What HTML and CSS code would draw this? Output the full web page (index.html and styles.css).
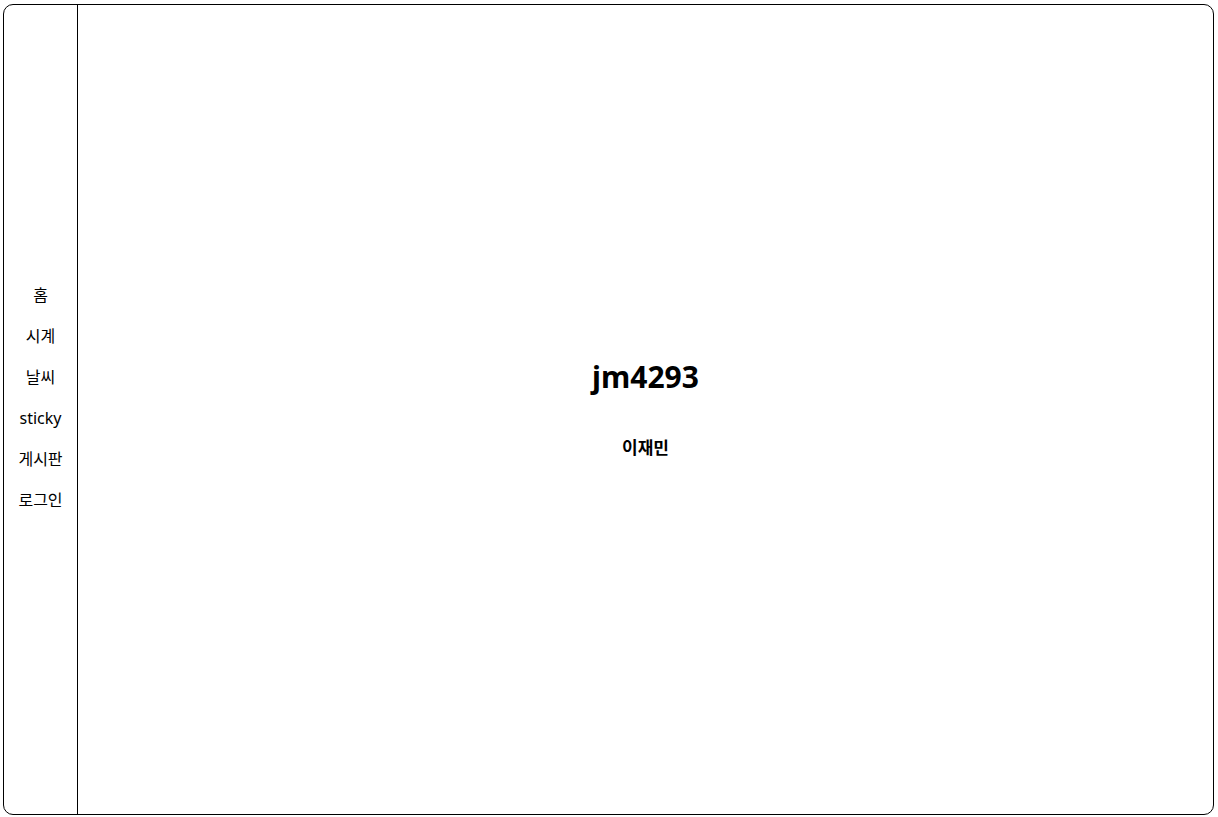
FILE: index.html
```html
<!DOCTYPE html>
<html lang="ko">
<head>
<meta charset="utf-8">
<title>jm4293</title>
<link rel="stylesheet" href="styles.css">
</head>
<body>
<div class="frame">
  <nav class="sidebar">
    <a class="nav-item">홈</a>
    <a class="nav-item">시계</a>
    <a class="nav-item">날씨</a>
    <a class="nav-item">sticky</a>
    <a class="nav-item">게시판</a>
    <a class="nav-item">로그인</a>
  </nav>
  <main class="main">
    <h1 class="title">jm4293</h1>
    <p class="name">이재민</p>
  </main>
</div>
</body>
</html>
```
FILE: styles.css
```css
html, body {
  margin: 0;
  padding: 0;
  background: #fff;
}
body {
  padding: 4px 4px 2px 3px;
  font-family: "Noto Sans", "Noto Sans CJK KR", sans-serif;
  color: #000;
}
.frame {
  box-sizing: border-box;
  height: 811px;
  border: 1px solid #000;
  border-radius: 10px;
  display: flex;
  overflow: hidden;
}
.sidebar {
  width: 73px;
  border-right: 1px solid #000;
  display: flex;
  flex-direction: column;
  justify-content: center;
  align-items: center;
  gap: 17px;
  padding-bottom: 24px;
}
.nav-item {
  font-size: 16px;
  line-height: 24px;
  color: #000;
}
.main {
  flex: 1;
  display: flex;
  flex-direction: column;
  justify-content: center;
  align-items: center;
  padding-bottom: 3px;
}
.title {
  margin: 0;
  font-size: 30px;
  font-weight: 700;
  line-height: 40px;
}
.name {
  margin: 39px 0 0;
  font-size: 17px;
  font-weight: 700;
  line-height: 24px;
}
```
